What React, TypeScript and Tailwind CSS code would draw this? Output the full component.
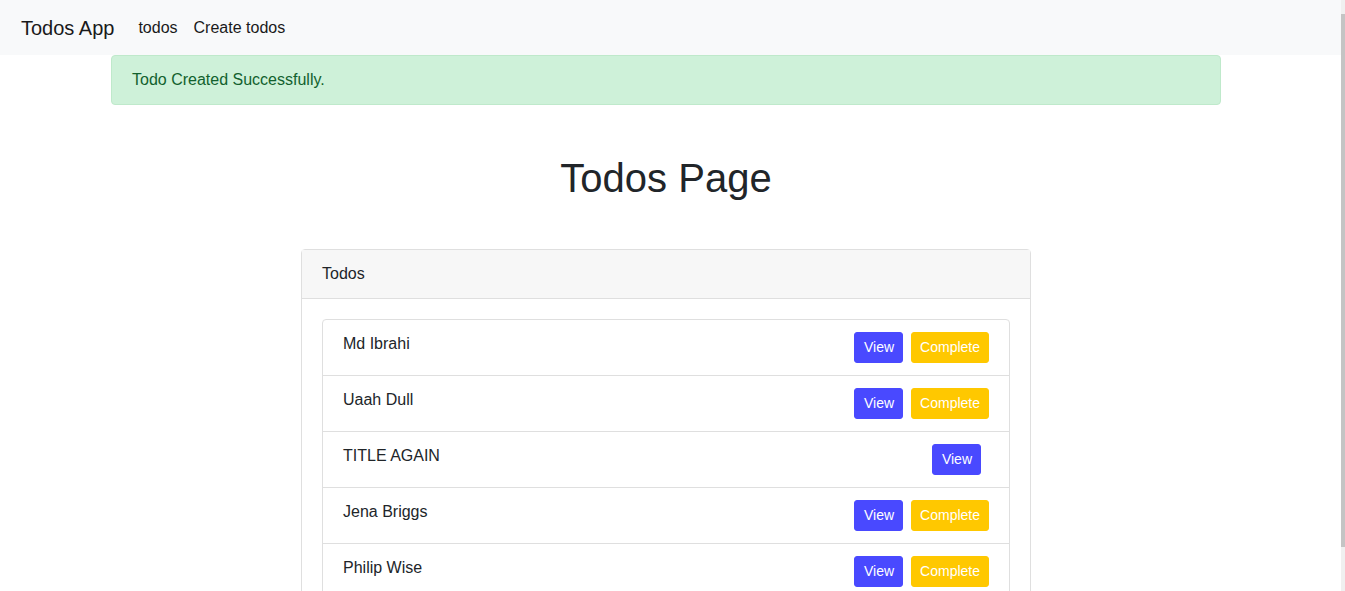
import React from "react";

const todos = [
  { title: "Md Ibrahi", done: false },
  { title: "Uaah Dull", done: false },
  { title: "TITLE AGAIN", done: true },
  { title: "Jena Briggs", done: false },
  { title: "Philip Wise", done: false },
];

function TodoItem({ title, done }: { title: string; done: boolean }) {
  return (
    <li className="-mt-px flex items-start justify-between border border-[#dfdfdf] px-5 py-3 first:mt-0 first:rounded-t">
      <span className="leading-6">{title}</span>
      <div className="flex">
        <button className="mr-2 rounded-[3px] border border-[#4949ff] bg-[#4949ff] py-1 pr-2 pl-[9px] text-sm leading-[21px] text-white">
          View
        </button>
        {!done && (
          <button className="rounded-[3px] border border-[#ffc800] bg-[#ffc800] px-2 py-1 text-sm leading-[21px] text-white">
            Complete
          </button>
        )}
      </div>
    </li>
  );
}

export default function App() {
  return (
    <div
      className="flex h-[591px] overflow-hidden bg-white text-base text-[#212529]"
      style={{ fontFamily: '"Liberation Sans", Arial, sans-serif' }}
    >
      <div className="flex-1">
        <nav className="flex h-[55px] items-center bg-[#f8f9fa] px-[21px]">
          <span className="mr-4 text-xl text-[#1a1a1a]">Todos App</span>
          <a className="px-2 text-[#1a1a1a]">todos</a>
          <a className="px-2 text-[#1a1a1a]">Create todos</a>
        </nav>

        <div className="ml-[111px] w-[1110px]">
          <div className="rounded border border-[#bfe9cb] bg-[#cef1d9] px-5 py-3 leading-6 text-[#12612e]">
            Todo Created Successfully.
          </div>

          <h1 className="mt-[49px] text-center text-[40px] leading-[48px] text-[#212529]">
            Todos Page
          </h1>

          <div className="mx-auto mt-[47px] w-[730px] rounded border border-[#dfdfdf]">
            <div className="border-b border-[#dfdfdf] bg-[#f7f7f7] px-5 py-3 leading-6">
              Todos
            </div>
            <div className="p-5">
              <ul>
                {todos.map((t) => (
                  <TodoItem key={t.title} title={t.title} done={t.done} />
                ))}
              </ul>
            </div>
          </div>
        </div>
      </div>

      <div className="flex w-[4px] flex-col bg-[#f0f0f0] pt-[14px] pb-[44px]">
        <div className="flex-1 bg-[#c4c4c4]" />
      </div>
    </div>
  );
}
